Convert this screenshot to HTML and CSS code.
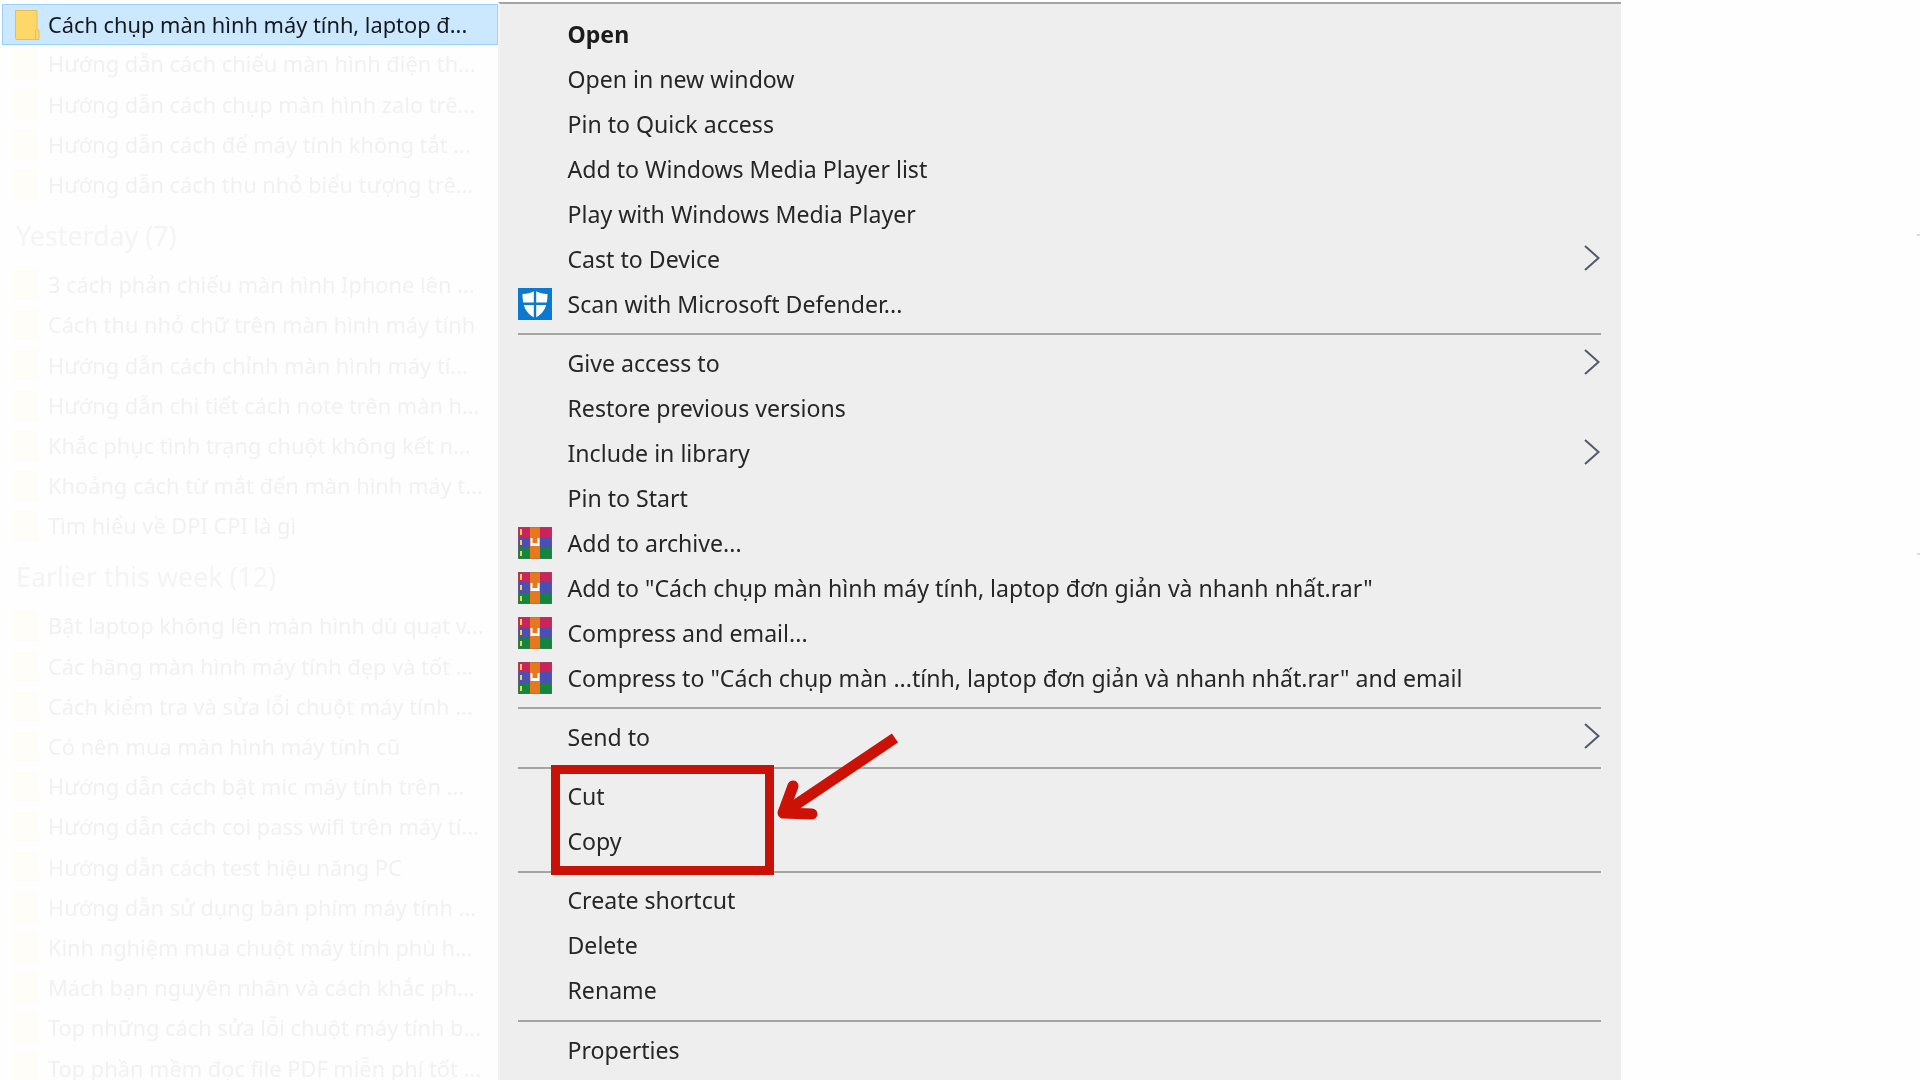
FILE: index.html
```html
<!DOCTYPE html>
<html lang="vi">
<head>
<meta charset="utf-8">
<title>Context menu</title>
<link rel="stylesheet" href="styles.css">
</head>
<body>
<svg class="defs" width="0" height="0" aria-hidden="true">
  <symbol id="folder" viewBox="0 0 26 32">
    <path d="M1.500 1.500h20.500a1 1 0 0 1 1 1V21h2v9.500H2.500a1 1 0 0 1-1-1z" fill="#fdd868" stroke="#e6bd57" stroke-width="1"/>
    <path d="M21.500 21v9" stroke="#e6bd57" stroke-width="1"/>
  </symbol>
  <symbol id="rar" viewBox="0 0 34 32">
    <rect width="34" height="10" fill="#c9245c"/>
    <rect y="10" width="34" height="11" fill="#4a4fb0"/>
    <rect y="21" width="34" height="11" fill="#14843f"/>
    <rect x="12" width="10" height="32" fill="#e8781f"/>
    <path d="M3 2v6M3 13v5M3 24v5" stroke="#f2d24f" stroke-width="2"/>
    <path d="M12.500 11v8h9v-8h-2v5h-5v-5z" fill="#fff"/>
    <rect width="34" height="32" fill="none" stroke="#7a6a70" stroke-width=".6"/>
  </symbol>
  <symbol id="shield" viewBox="0 0 34 32">
    <rect width="34" height="32" fill="#0b79d0"/>
    <path d="M17 2.500c3 2 7.500 3.500 12.500 3.500 0 11-2.500 19-12.500 24C7 25 4.500 17 4.500 6 9.500 6 14 4.500 17 2.500z" fill="#fff"/>
    <path d="M15.800 2h2.400v28h-2.400zM4 14.500h26v2.400H4z" fill="#0b79d0"/>
  </symbol>
  <symbol id="chev" viewBox="0 0 16 26">
    <path d="M1 1l13.500 12L1 25" fill="none" stroke="#55596a" stroke-width="2"/>
  </symbol>
</svg>

<div class="screen">
  <aside class="files">
    <div class="file selected"><svg class="ficon"><use href="#folder"/></svg><span>Cách chụp màn hình máy tính, laptop đ...</span></div>
    <div class="file"><svg class="ficon"><use href="#folder"/></svg><span>Hướng dẫn cách chiếu màn hình điện th...</span></div>
    <div class="file"><svg class="ficon"><use href="#folder"/></svg><span>Hướng dẫn cách chụp màn hình zalo trê...</span></div>
    <div class="file"><svg class="ficon"><use href="#folder"/></svg><span>Hướng dẫn cách để máy tính không tắt ...</span></div>
    <div class="file"><svg class="ficon"><use href="#folder"/></svg><span>Hướng dẫn cách thu nhỏ biểu tượng trê...</span></div>
    <h2 class="group-title">Yesterday (7)</h2>
    <div class="file"><svg class="ficon"><use href="#folder"/></svg><span>3 cách phản chiếu màn hình Iphone lên ...</span></div>
    <div class="file"><svg class="ficon"><use href="#folder"/></svg><span>Cách thu nhỏ chữ trên màn hình máy tính</span></div>
    <div class="file"><svg class="ficon"><use href="#folder"/></svg><span>Hướng dẫn cách chỉnh màn hình máy tí...</span></div>
    <div class="file"><svg class="ficon"><use href="#folder"/></svg><span>Hướng dẫn chi tiết cách note trên màn h...</span></div>
    <div class="file"><svg class="ficon"><use href="#folder"/></svg><span>Khắc phục tình trạng chuột không kết n...</span></div>
    <div class="file"><svg class="ficon"><use href="#folder"/></svg><span>Khoảng cách từ mắt đến màn hình máy t...</span></div>
    <div class="file"><svg class="ficon"><use href="#folder"/></svg><span>Tìm hiểu về DPI CPI là gì</span></div>
    <h2 class="group-title">Earlier this week (12)</h2>
    <div class="file"><svg class="ficon"><use href="#folder"/></svg><span>Bật laptop không lên màn hình dù quạt v...</span></div>
    <div class="file"><svg class="ficon"><use href="#folder"/></svg><span>Các hãng màn hình máy tính đẹp và tốt ...</span></div>
    <div class="file"><svg class="ficon"><use href="#folder"/></svg><span>Cách kiểm tra và sửa lỗi chuột máy tính ...</span></div>
    <div class="file"><svg class="ficon"><use href="#folder"/></svg><span>Có nên mua màn hình máy tính cũ</span></div>
    <div class="file"><svg class="ficon"><use href="#folder"/></svg><span>Hướng dẫn cách bật mic máy tính trên ...</span></div>
    <div class="file"><svg class="ficon"><use href="#folder"/></svg><span>Hướng dẫn cách coi pass wifi trên máy tí...</span></div>
    <div class="file"><svg class="ficon"><use href="#folder"/></svg><span>Hướng dẫn cách test hiệu năng PC</span></div>
    <div class="file"><svg class="ficon"><use href="#folder"/></svg><span>Hướng dẫn sử dụng bàn phím máy tính ...</span></div>
    <div class="file"><svg class="ficon"><use href="#folder"/></svg><span>Kinh nghiệm mua chuột máy tính phù h...</span></div>
    <div class="file"><svg class="ficon"><use href="#folder"/></svg><span>Mách bạn nguyên nhân và cách khắc ph...</span></div>
    <div class="file"><svg class="ficon"><use href="#folder"/></svg><span>Top những cách sửa lỗi chuột máy tính b...</span></div>
    <div class="file"><svg class="ficon"><use href="#folder"/></svg><span>Top phần mềm đọc file PDF miễn phí tốt ...</span></div>
  </aside>

  <nav class="menu">
    <div class="item bold"><span class="slot"></span><span class="label">Open</span></div>
    <div class="item"><span class="slot"></span><span class="label">Open in new window</span></div>
    <div class="item"><span class="slot"></span><span class="label">Pin to Quick access</span></div>
    <div class="item"><span class="slot"></span><span class="label">Add to Windows Media Player list</span></div>
    <div class="item"><span class="slot"></span><span class="label">Play with Windows Media Player</span></div>
    <div class="item"><span class="slot"></span><span class="label">Cast to Device</span><svg class="chev"><use href="#chev"/></svg></div>
    <div class="item"><span class="slot"><svg class="micon"><use href="#shield"/></svg></span><span class="label">Scan with Microsoft Defender...</span></div>
    <hr class="sep">
    <div class="item"><span class="slot"></span><span class="label">Give access to</span><svg class="chev"><use href="#chev"/></svg></div>
    <div class="item"><span class="slot"></span><span class="label">Restore previous versions</span></div>
    <div class="item"><span class="slot"></span><span class="label">Include in library</span><svg class="chev"><use href="#chev"/></svg></div>
    <div class="item"><span class="slot"></span><span class="label">Pin to Start</span></div>
    <div class="item"><span class="slot"><svg class="micon"><use href="#rar"/></svg></span><span class="label">Add to archive...</span></div>
    <div class="item"><span class="slot"><svg class="micon"><use href="#rar"/></svg></span><span class="label">Add to "Cách chụp màn hình máy tính, laptop đơn giản và nhanh nhất.rar"</span></div>
    <div class="item"><span class="slot"><svg class="micon"><use href="#rar"/></svg></span><span class="label">Compress and email...</span></div>
    <div class="item"><span class="slot"><svg class="micon"><use href="#rar"/></svg></span><span class="label">Compress to "Cách chụp màn ...tính, laptop đơn giản và nhanh nhất.rar" and email</span></div>
    <hr class="sep">
    <div class="item"><span class="slot"></span><span class="label">Send to</span><svg class="chev"><use href="#chev"/></svg></div>
    <hr class="sep thin">
    <div class="item"><span class="slot"></span><span class="label">Cut</span></div>
    <div class="item"><span class="slot"></span><span class="label">Copy</span></div>
    <hr class="sep thin">
    <div class="item"><span class="slot"></span><span class="label">Create shortcut</span></div>
    <div class="item"><span class="slot"></span><span class="label">Delete</span></div>
    <div class="item"><span class="slot"></span><span class="label">Rename</span></div>
    <hr class="sep thin">
    <div class="item"><span class="slot"></span><span class="label">Properties</span></div>
  </nav>

  <div class="callout-box"></div>
  <svg class="callout-arrow" viewBox="0 0 130 90" aria-hidden="true">
    <path d="M121 5L11 79" fill="none" stroke="#cc1206" stroke-width="11"/>
    <path d="M19 53L9 80L38 81" fill="none" stroke="#cc1206" stroke-width="11" stroke-linecap="round" stroke-linejoin="round"/>
  </svg>
  <i class="edge-mark upper"></i>
  <i class="edge-mark lower"></i>
</div>
</body>
</html>
```
FILE: styles.css
```css
html, body {
  margin: 0;
  height: 100%;
  overflow: hidden;
  background: #fefefe;
}
.defs { position: absolute; }
.screen {
  position: relative;
  display: flex;
  align-items: flex-start;
  width: 1920px;
  height: 1080px;
  overflow: hidden;
  font-family: "Noto Sans", "Open Sans", sans-serif;
  filter: blur(0.45px);
}
.files {
  flex: 0 0 498px;
  box-sizing: border-box;
  padding-top: 4px;
  color: #f1f1f1;
  font-size: 21.800px;
}
.file {
  display: flex;
  align-items: center;
  gap: 9px;
  height: 40.200px;
  padding-left: 13px;
  line-height: 1;
  white-space: nowrap;
}
.file .ficon {
  flex: 0 0 26px;
  width: 26px;
  height: 32px;
  opacity: .04;
}
.file.selected {
  box-sizing: border-box;
  gap: 8px;
  height: 41px;
  margin: 0 0 -.8px 2px;
  padding-left: 11px;
  background: #cce8ff;
  border: 1px solid #99d1ff;
  color: #14191e;
}
.file.selected .ficon { opacity: 1; }
.group-title {
  box-sizing: border-box;
  display: flex;
  align-items: flex-end;
  height: 60px;
  margin: 0;
  padding: 0 0 9px 16px;
  font-size: 26.800px;
  font-weight: 400;
  line-height: 40px;
  color: #f4f4f4;
}
.menu {
  flex: 0 0 1122.500px;
  box-sizing: border-box;
  height: 1078px;
  margin-top: 2px;
  padding: 7px 20px 0 18px;
  background: #eeeeee;
  border-top: 2px solid #a4a4a4;
  border-left: 2px solid #f5f3f1;
  color: #262626;
  font-size: 23.100px;
}
.item {
  position: relative;
  display: flex;
  align-items: center;
  height: 45px;
  white-space: nowrap;
}
.item.bold { font-weight: 700; color: #1c1c1c; }
.slot {
  flex: 0 0 49.500px;
  display: flex;
  align-items: center;
}
.micon { width: 34px; height: 32px; }
.chev {
  position: absolute;
  right: 1px;
  top: 8.500px;
  width: 16px;
  height: 26px;
}
.sep {
  height: 2px;
  margin: 7px 0 5px;
  border: 0;
  background: #a4a4a4;
}
.sep.thin { margin: 7.600px 0 4.800px; }
.callout-box {
  position: absolute;
  left: 551px;
  top: 765px;
  box-sizing: border-box;
  width: 223px;
  height: 110px;
  border: 9px solid #c81208;
}
.callout-arrow {
  position: absolute;
  left: 774px;
  top: 733px;
  width: 130px;
  height: 90px;
}
.edge-mark {
  position: absolute;
  right: 0;
  width: 3px;
  height: 2px;
  background: #dcdcdc;
}
.edge-mark.upper { top: 234px; }
.edge-mark.lower { top: 553px; }
```
